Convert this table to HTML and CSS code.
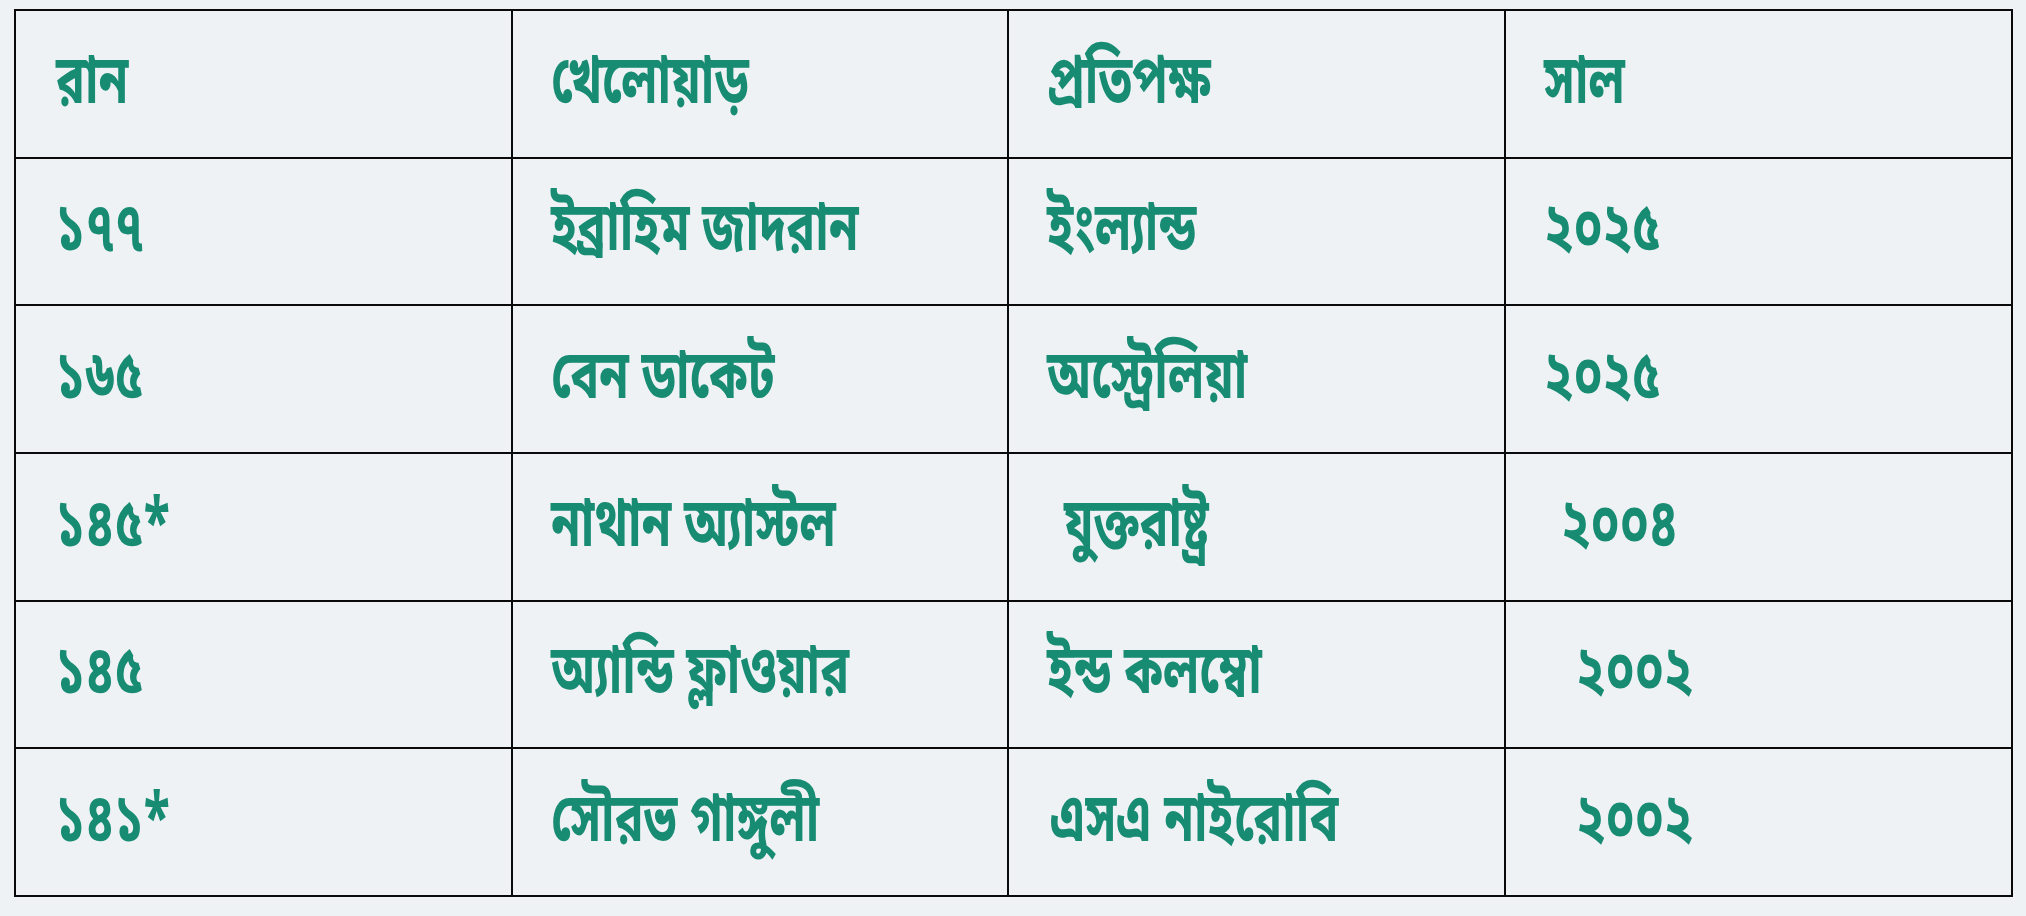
FILE: index.html
```html
<!DOCTYPE html>
<html lang="bn">
<head>
<meta charset="utf-8">
<title>রান তালিকা</title>
<link rel="stylesheet" href="styles.css">
</head>
<body>
<table class="runs">
  <colgroup>
    <col class="c1"><col class="c2"><col class="c3"><col class="c4">
  </colgroup>
  <tr><td><span class="t">রান</span></td><td><span class="t">খেলোয়াড়</span></td><td><span class="t">প্রতিপক্ষ</span></td><td><span class="t">সাল</span></td></tr>
  <tr><td><span class="t">১৭৭</span></td><td><span class="t">ইব্রাহিম জাদরান</span></td><td><span class="t">ইংল্যান্ড</span></td><td><span class="t">২০২৫</span></td></tr>
  <tr><td><span class="t">১৬৫</span></td><td><span class="t">বেন ডাকেট</span></td><td><span class="t">অস্ট্রেলিয়া</span></td><td><span class="t">২০২৫</span></td></tr>
  <tr><td><span class="t">১৪৫*</span></td><td><span class="t">নাথান অ্যাস্টল</span></td><td class="indent-1"><span class="t">যুক্তরাষ্ট্র</span></td><td class="indent-1"><span class="t">২০০৪</span></td></tr>
  <tr><td><span class="t">১৪৫</span></td><td><span class="t">অ্যান্ডি ফ্লাওয়ার</span></td><td><span class="t">ইন্ড কলম্বো</span></td><td class="indent-2"><span class="t">২০০২</span></td></tr>
  <tr><td><span class="t">১৪১*</span></td><td><span class="t">সৌরভ গাঙ্গুলী</span></td><td class="indent-0"><span class="t">এসএ নাইরোবি</span></td><td class="indent-2"><span class="t">২০০২</span></td></tr>
</table>
</body>
</html>
```
FILE: styles.css
```css
html, body {
  margin: 0;
  padding: 0;
  background: #eef2f5;
}
body {
  padding: 9px 0 0 14px;
}
.runs {
  border-collapse: collapse;
  width: 1997px;
  table-layout: fixed;
  background: #eef2f5;
}
.runs .c1 { width: 497px; }
.runs .c2 { width: 496px; }
.runs .c3 { width: 497px; }
.runs .c4 { width: 507px; }
.runs td {
  border: 2px solid #0a0a0a;
  height: 147.7px;
  box-sizing: border-box;
  padding: 9px 0 0 38px;
  vertical-align: middle;
  font-family: "Noto Sans Bengali", "Noto Serif Bengali", "Lohit Bengali", "FreeSans", "Noto Sans", sans-serif;
  font-weight: 700;
  font-size: 48px;
  line-height: 1.2;
  color: #188b73;
  white-space: nowrap;
}
.runs td:first-child { padding-left: 40px; }
.runs .t {
  display: inline-block;
  transform: scaleY(1.4);
  transform-origin: 50% 55%;
}
.runs td.indent-0 { padding-left: 41px; }
.runs td.indent-1 { padding-left: 55px; }
.runs td.indent-2 { padding-left: 70px; }
```
